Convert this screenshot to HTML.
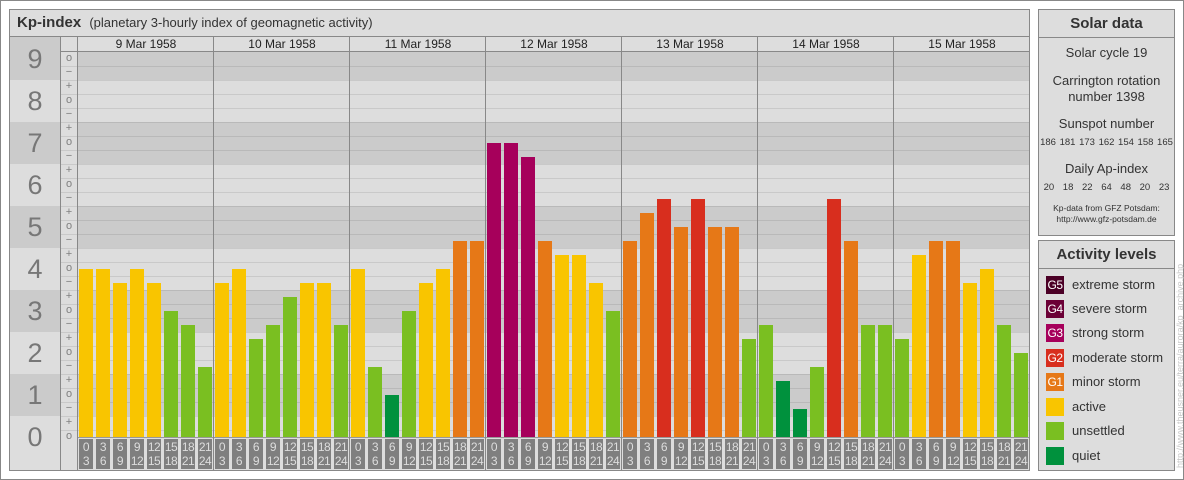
<!DOCTYPE html>
<html><head><meta charset="utf-8"><style>
*{margin:0;padding:0;box-sizing:border-box}
body{width:1184px;height:480px;position:relative;background:#fff;font-family:"Liberation Sans",sans-serif;overflow:hidden}
.a{position:absolute}
#outer{left:0;top:0;width:1184px;height:480px;border:1px solid #888}
#main{left:9px;top:9px;width:1021px;height:462px;border:1px solid #888;background:#ddd}
.dk{background:#cbcbcb}
.b{position:absolute;width:14px;z-index:2}
.q{background:#00913d}.u{background:#7abf21}.ac{background:#f9c500}.g1{background:#e67817}.g2{background:#d82e1e}.g3{background:#a6005b}
.v2{top:409px;height:28px}.v3{top:395px;height:42px}.v4{top:381px;height:56px}.v5{top:367px;height:70px}.v6{top:353px;height:84px}.v7{top:339px;height:98px}.v8{top:325px;height:112px}.v9{top:311px;height:126px}.v10{top:297px;height:140px}.v11{top:283px;height:154px}.v12{top:269px;height:168px}.v13{top:255px;height:182px}.v14{top:241px;height:196px}.v15{top:227px;height:210px}.v16{top:213px;height:224px}.v17{top:199px;height:238px}.v20{top:157px;height:280px}.v21{top:143px;height:294px}
.vl{position:absolute;top:37px;width:1px;height:433px;background:#888;z-index:3}
.dt{position:absolute;top:37px;width:136px;height:14px;font-size:12px;line-height:14px;text-align:center;color:#222}
.n{position:absolute;left:10px;width:50px;height:42px;line-height:42px;text-align:center;font-size:27px;color:#777}
.s{position:absolute;left:61px;width:16px;height:14px;line-height:13px;text-align:center;font-size:11px;color:#808080}
.l{position:absolute;top:439px;width:14px;height:30px;background:#7f7f7f;color:#ddd;font-size:12px;line-height:14px;text-align:center;padding-top:1px;letter-spacing:-0.5px}
.box{border:1px solid #888;background:#ddd}
.hd{font-weight:bold;font-size:15px;color:#333;text-align:center;border-bottom:1px solid #888}
.c{text-align:center;color:#333;position:absolute;left:0;width:100%}
.sq{position:absolute;left:7px;width:18px;height:18px;color:#fff;font-size:12px;line-height:18px;text-align:center;letter-spacing:-0.5px}
.lt{position:absolute;left:33px;font-size:13px;color:#333;line-height:18px}
</style></head><body>
<div class="a" id="outer"></div>
<div class="a" id="main"></div>
<div class="a" style="left:10px;top:10px;width:1019px;height:27px;border-bottom:1px solid #888;background:#ddd"></div>
<div class="a" style="left:17px;top:14px;font-size:15px;color:#333;white-space:nowrap"><b>Kp-index</b> <span style="font-size:13px;margin-left:4px">(planetary 3-hourly index of geomagnetic activity)</span></div>
<div class="a dk" style="left:10px;top:37px;width:50px;height:43px"></div>
<div class="a dk" style="left:10px;top:122px;width:50px;height:42px"></div>
<div class="a dk" style="left:10px;top:206px;width:50px;height:42px"></div>
<div class="a dk" style="left:10px;top:290px;width:50px;height:42px"></div>
<div class="a dk" style="left:10px;top:374px;width:50px;height:42px"></div>
<div class="a dk" style="left:78px;top:52px;width:951px;height:28px"></div>
<div class="a dk" style="left:78px;top:122px;width:951px;height:42px"></div>
<div class="a dk" style="left:78px;top:206px;width:951px;height:42px"></div>
<div class="a dk" style="left:78px;top:290px;width:951px;height:42px"></div>
<div class="a dk" style="left:78px;top:374px;width:951px;height:42px"></div>
<div class="a" style="left:61px;top:53px;width:968px;height:385px;background:repeating-linear-gradient(to bottom,transparent 0,transparent 13px,rgba(0,0,0,0.09) 13px,rgba(0,0,0,0.09) 14px)"></div>
<div class="a" style="left:61px;top:51px;width:968px;height:1px;background:#888"></div>
<div class="a" style="left:78px;top:437px;width:951px;height:1px;background:#999"></div>
<div class="vl" style="left:60px"></div><div class="vl" style="left:77px"></div>
<div class="vl" style="left:213px"></div><div class="vl" style="left:349px"></div><div class="vl" style="left:485px"></div><div class="vl" style="left:621px"></div><div class="vl" style="left:757px"></div><div class="vl" style="left:893px"></div>
<div class="dt" style="left:78px">9 Mar 1958</div><div class="dt" style="left:214px">10 Mar 1958</div><div class="dt" style="left:350px">11 Mar 1958</div><div class="dt" style="left:486px">12 Mar 1958</div><div class="dt" style="left:622px">13 Mar 1958</div><div class="dt" style="left:758px">14 Mar 1958</div><div class="dt" style="left:894px">15 Mar 1958</div>
<div class="n" style="top:38px">9</div><div class="n" style="top:80px">8</div><div class="n" style="top:122px">7</div><div class="n" style="top:164px">6</div><div class="n" style="top:206px">5</div><div class="n" style="top:248px">4</div><div class="n" style="top:290px">3</div><div class="n" style="top:332px">2</div><div class="n" style="top:374px">1</div><div class="n" style="top:416px">0</div>
<div class="s" style="top:52px">o</div><div class="s" style="top:66px">−</div>
<div class="s" style="top:80px">+</div><div class="s" style="top:94px">o</div><div class="s" style="top:108px">−</div>
<div class="s" style="top:122px">+</div><div class="s" style="top:136px">o</div><div class="s" style="top:150px">−</div>
<div class="s" style="top:164px">+</div><div class="s" style="top:178px">o</div><div class="s" style="top:192px">−</div>
<div class="s" style="top:206px">+</div><div class="s" style="top:220px">o</div><div class="s" style="top:234px">−</div>
<div class="s" style="top:248px">+</div><div class="s" style="top:262px">o</div><div class="s" style="top:276px">−</div>
<div class="s" style="top:290px">+</div><div class="s" style="top:304px">o</div><div class="s" style="top:318px">−</div>
<div class="s" style="top:332px">+</div><div class="s" style="top:346px">o</div><div class="s" style="top:360px">−</div>
<div class="s" style="top:374px">+</div><div class="s" style="top:388px">o</div><div class="s" style="top:402px">−</div>
<div class="s" style="top:416px">+</div><div class="s" style="top:430px">o</div>
<div class="b ac v12" style="left:79px"></div><div class="b ac v12" style="left:96px"></div><div class="b ac v11" style="left:113px"></div><div class="b ac v12" style="left:130px"></div><div class="b ac v11" style="left:147px"></div><div class="b u v9" style="left:164px"></div><div class="b u v8" style="left:181px"></div><div class="b u v5" style="left:198px"></div>
<div class="b ac v11" style="left:215px"></div><div class="b ac v12" style="left:232px"></div><div class="b u v7" style="left:249px"></div><div class="b u v8" style="left:266px"></div><div class="b u v10" style="left:283px"></div><div class="b ac v11" style="left:300px"></div><div class="b ac v11" style="left:317px"></div><div class="b u v8" style="left:334px"></div>
<div class="b ac v12" style="left:351px"></div><div class="b u v5" style="left:368px"></div><div class="b q v3" style="left:385px"></div><div class="b u v9" style="left:402px"></div><div class="b ac v11" style="left:419px"></div><div class="b ac v12" style="left:436px"></div><div class="b g1 v14" style="left:453px"></div><div class="b g1 v14" style="left:470px"></div>
<div class="b g3 v21" style="left:487px"></div><div class="b g3 v21" style="left:504px"></div><div class="b g3 v20" style="left:521px"></div><div class="b g1 v14" style="left:538px"></div><div class="b ac v13" style="left:555px"></div><div class="b ac v13" style="left:572px"></div><div class="b ac v11" style="left:589px"></div><div class="b u v9" style="left:606px"></div>
<div class="b g1 v14" style="left:623px"></div><div class="b g1 v16" style="left:640px"></div><div class="b g2 v17" style="left:657px"></div><div class="b g1 v15" style="left:674px"></div><div class="b g2 v17" style="left:691px"></div><div class="b g1 v15" style="left:708px"></div><div class="b g1 v15" style="left:725px"></div><div class="b u v7" style="left:742px"></div>
<div class="b u v8" style="left:759px"></div><div class="b q v4" style="left:776px"></div><div class="b q v2" style="left:793px"></div><div class="b u v5" style="left:810px"></div><div class="b g2 v17" style="left:827px"></div><div class="b g1 v14" style="left:844px"></div><div class="b u v8" style="left:861px"></div><div class="b u v8" style="left:878px"></div>
<div class="b u v7" style="left:895px"></div><div class="b ac v13" style="left:912px"></div><div class="b g1 v14" style="left:929px"></div><div class="b g1 v14" style="left:946px"></div><div class="b ac v11" style="left:963px"></div><div class="b ac v12" style="left:980px"></div><div class="b u v8" style="left:997px"></div><div class="b u v6" style="left:1014px"></div>
<div class="l" style="left:79px">0<br>3</div><div class="l" style="left:96px">3<br>6</div><div class="l" style="left:113px">6<br>9</div><div class="l" style="left:130px">9<br>12</div><div class="l" style="left:147px">12<br>15</div><div class="l" style="left:164px">15<br>18</div><div class="l" style="left:181px">18<br>21</div><div class="l" style="left:198px">21<br>24</div>
<div class="l" style="left:215px">0<br>3</div><div class="l" style="left:232px">3<br>6</div><div class="l" style="left:249px">6<br>9</div><div class="l" style="left:266px">9<br>12</div><div class="l" style="left:283px">12<br>15</div><div class="l" style="left:300px">15<br>18</div><div class="l" style="left:317px">18<br>21</div><div class="l" style="left:334px">21<br>24</div>
<div class="l" style="left:351px">0<br>3</div><div class="l" style="left:368px">3<br>6</div><div class="l" style="left:385px">6<br>9</div><div class="l" style="left:402px">9<br>12</div><div class="l" style="left:419px">12<br>15</div><div class="l" style="left:436px">15<br>18</div><div class="l" style="left:453px">18<br>21</div><div class="l" style="left:470px">21<br>24</div>
<div class="l" style="left:487px">0<br>3</div><div class="l" style="left:504px">3<br>6</div><div class="l" style="left:521px">6<br>9</div><div class="l" style="left:538px">9<br>12</div><div class="l" style="left:555px">12<br>15</div><div class="l" style="left:572px">15<br>18</div><div class="l" style="left:589px">18<br>21</div><div class="l" style="left:606px">21<br>24</div>
<div class="l" style="left:623px">0<br>3</div><div class="l" style="left:640px">3<br>6</div><div class="l" style="left:657px">6<br>9</div><div class="l" style="left:674px">9<br>12</div><div class="l" style="left:691px">12<br>15</div><div class="l" style="left:708px">15<br>18</div><div class="l" style="left:725px">18<br>21</div><div class="l" style="left:742px">21<br>24</div>
<div class="l" style="left:759px">0<br>3</div><div class="l" style="left:776px">3<br>6</div><div class="l" style="left:793px">6<br>9</div><div class="l" style="left:810px">9<br>12</div><div class="l" style="left:827px">12<br>15</div><div class="l" style="left:844px">15<br>18</div><div class="l" style="left:861px">18<br>21</div><div class="l" style="left:878px">21<br>24</div>
<div class="l" style="left:895px">0<br>3</div><div class="l" style="left:912px">3<br>6</div><div class="l" style="left:929px">6<br>9</div><div class="l" style="left:946px">9<br>12</div><div class="l" style="left:963px">12<br>15</div><div class="l" style="left:980px">15<br>18</div><div class="l" style="left:997px">18<br>21</div><div class="l" style="left:1014px">21<br>24</div>
<div class="a box" style="left:1038px;top:9px;width:137px;height:227px">
 <div class="hd" style="height:28px;line-height:28px">Solar data</div>
 <div class="c" style="top:35px;font-size:13px">Solar cycle 19</div>
 <div class="c" style="top:63px;font-size:13px;line-height:16px">Carrington rotation<br>number 1398</div>
 <div class="c" style="top:106px;font-size:13px">Sunspot number</div>
 <div class="c" style="top:127px;font-size:9.5px;word-spacing:1px">186 181 173 162 154 158 165</div>
 <div class="c" style="top:151px;font-size:13px">Daily Ap-index</div>
 <div class="c" style="top:172px;font-size:9.5px;word-spacing:6px">20 18 22 64 48 20 23</div>
 <div class="c" style="top:193px;font-size:8.5px;line-height:11px">Kp-data from GFZ Potsdam:<br>http://www.gfz-potsdam.de</div>
</div>
<div class="a box" style="left:1038px;top:240px;width:137px;height:231px">
 <div class="hd" style="height:28px;line-height:28px">Activity levels</div>
 <div class="sq" style="top:35px;background:#4b0026">G5</div><div class="lt" style="top:35px">extreme storm</div>
 <div class="sq" style="top:59px;background:#6b0036">G4</div><div class="lt" style="top:59px">severe storm</div>
 <div class="sq" style="top:83px;background:#a6005b">G3</div><div class="lt" style="top:83px">strong storm</div>
 <div class="sq" style="top:108px;background:#d82e1e">G2</div><div class="lt" style="top:108px">moderate storm</div>
 <div class="sq" style="top:132px;background:#e67817">G1</div><div class="lt" style="top:132px">minor storm</div>
 <div class="sq" style="top:157px;background:#f9c500"></div><div class="lt" style="top:157px">active</div>
 <div class="sq" style="top:181px;background:#7abf21"></div><div class="lt" style="top:181px">unsettled</div>
 <div class="sq" style="top:206px;background:#00913d"></div><div class="lt" style="top:206px">quiet</div>
</div>
<div class="a" style="left:1175px;top:470px;width:240px;height:10px;transform-origin:0 0;transform:rotate(-90deg);font-size:9px;line-height:10px;color:#c8c8c8;white-space:nowrap;padding-left:2px">http://www.theusner.eu/terra/aurora/kp_archive.php</div>
</body></html>
